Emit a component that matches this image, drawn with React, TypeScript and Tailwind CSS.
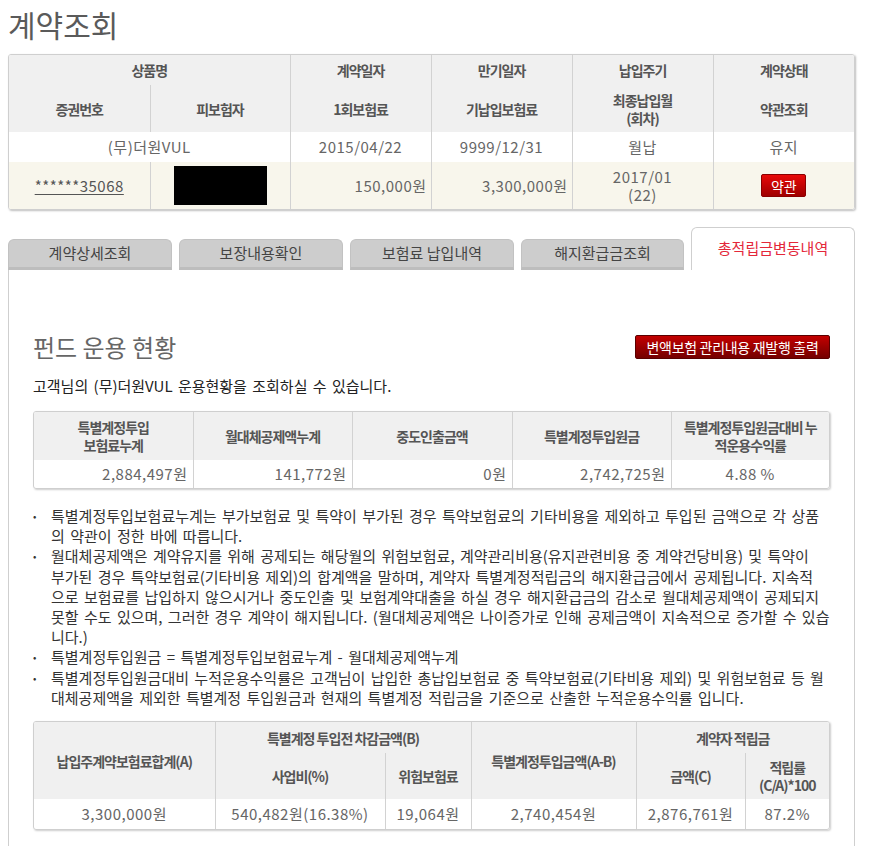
const th = "bg-[#f0f0f0] text-[14px] font-bold tracking-[-1px] text-[#555] leading-[18px] text-center align-middle";
const td = "text-[15px] tracking-[0.5px] text-[#666] leading-[18px] align-middle";
const bl = "border-l border-[#d2d2d2]";

const tabs = ["계약상세조회", "보장내용확인", "보험료 납입내역", "해지환급금조회"];

const notes: string[][] = [
  [
    "특별계정투입보험료누계는 부가보험료 및 특약이 부가된 경우 특약보험료의 기타비용을 제외하고 투입된 금액으로 각 상품",
    "의 약관이 정한 바에 따릅니다.",
  ],
  [
    "월대체공제액은 계약유지를 위해 공제되는 해당월의 위험보험료, 계약관리비용(유지관련비용 중 계약건당비용) 및 특약이",
    "부가된 경우 특약보험료(기타비용 제외)의 합계액을 말하며, 계약자 특별계정적립금의 해지환급금에서 공제됩니다. 지속적",
    "으로 보험료를 납입하지 않으시거나 중도인출 및 보험계약대출을 하실 경우 해지환급금의 감소로 월대체공제액이 공제되지",
    "못할 수도 있으며, 그러한 경우 계약이 해지됩니다. (월대체공제액은 나이증가로 인해 공제금액이 지속적으로 증가할 수 있습",
    "니다.)",
  ],
  ["특별계정투입원금 = 특별계정투입보험료누계 - 월대체공제액누계"],
  [
    "특별계정투입원금대비 누적운용수익률은 고객님이 납입한 총납입보험료 중 특약보험료(기타비용 제외) 및 위험보험료 등 월",
    "대체공제액을 제외한 특별계정 투입원금과 현재의 특별계정 적립금을 기준으로 산출한 누적운용수익률 입니다.",
  ],
];

function ContractTable() {
  return (
    <div className="ml-[8px] w-[847px] overflow-hidden rounded-[3px] border border-[#cfcfcf] shadow-[1px_1px_2px_rgba(0,0,0,0.25)]">
      <table className="w-full table-fixed border-collapse">
        <colgroup>
          <col className="w-[141px]" />
          <col className="w-[140px]" />
          <col className="w-[141px]" />
          <col className="w-[141px]" />
          <col className="w-[141px]" />
          <col className="w-[141px]" />
        </colgroup>
        <tbody>
          <tr className="h-[30px]">
            <th colSpan={2} className={th}>상품명</th>
            <th className={`${th} ${bl}`}>계약일자</th>
            <th className={`${th} ${bl}`}>만기일자</th>
            <th className={`${th} ${bl}`}>납입주기</th>
            <th className={`${th} ${bl}`}>계약상태</th>
          </tr>
          <tr className="h-[47px]">
            <th className={th}>증권번호</th>
            <th className={`${th} ${bl}`}>피보험자</th>
            <th className={`${th} ${bl}`}>1회보험료</th>
            <th className={`${th} ${bl}`}>기납입보험료</th>
            <th className={`${th} ${bl}`}>
              최종납입월
              <br />
              (회차)
            </th>
            <th className={`${th} ${bl}`}>약관조회</th>
          </tr>
          <tr className="h-[30px] bg-white">
            <td colSpan={2} className={`${td} text-center`}>(무)더원VUL</td>
            <td className={`${td} ${bl} text-center`}>2015/04/22</td>
            <td className={`${td} ${bl} text-center`}>9999/12/31</td>
            <td className={`${td} ${bl} text-center`}>월납</td>
            <td className={`${td} ${bl} text-center`}>유지</td>
          </tr>
          <tr className="h-[47px] bg-[#f8f6ec]">
            <td className={`${td} text-center`}>
              <a href="#" className="text-[#555] underline underline-offset-2">******35068</a>
            </td>
            <td className={`${bl} align-middle`}>
              <div className="mx-auto h-[39px] w-[93px] bg-black" />
            </td>
            <td className={`${td} ${bl} pr-[4px] text-right`}>150,000원</td>
            <td className={`${td} ${bl} pr-[4px] text-right`}>3,300,000원</td>
            <td className={`${td} ${bl} text-center`}>
              2017/01
              <br />
              (22)
            </td>
            <td className={`${bl} align-middle`}>
              <button className="mx-auto flex h-[23px] w-[45px] items-center justify-center rounded-[2px] border border-[#8a0000] bg-gradient-to-b from-[#e80a0a] to-[#a00000] text-[14px] leading-none text-white">
                약관
              </button>
            </td>
          </tr>
        </tbody>
      </table>
    </div>
  );
}

function Tabs() {
  return (
    <div className="ml-[8px] mt-[17px] flex w-[847px] items-end gap-[7px]">
      {tabs.map((t, i) => (
        <div
          key={t}
          className={`flex h-[31px] items-center justify-center rounded-t-[6px] border border-b-[3px] border-[#c2c2c2] border-b-[#bdbdbd] bg-[#cdcdcd] text-[15px] text-[#444] ${
            i === 3 ? "w-[163px]" : "w-[164px]"
          }`}
        >
          {t}
        </div>
      ))}
      <div className="flex h-[43px] w-[164px] justify-center rounded-t-[6px] border border-b-0 border-[#cfcfcf] bg-white pt-[8px] text-[15px] leading-[24px] text-[#e4273a]">
        총적립금변동내역
      </div>
    </div>
  );
}

function FundTable() {
  return (
    <div className="mt-[15px] w-[797px] overflow-hidden rounded-[3px] border border-[#cfcfcf] shadow-[1px_1px_2px_rgba(0,0,0,0.2)]">
      <table className="w-full table-fixed border-collapse">
        <colgroup>
          <col className="w-[159px]" />
          <col className="w-[159px]" />
          <col className="w-[160px]" />
          <col className="w-[159px]" />
          <col className="w-[158px]" />
        </colgroup>
        <tbody>
          <tr className="h-[48px]">
            <th className={th}>
              특별계정투입
              <br />
              보험료누계
            </th>
            <th className={`${th} ${bl}`}>월대체공제액누계</th>
            <th className={`${th} ${bl}`}>중도인출금액</th>
            <th className={`${th} ${bl}`}>특별계정투입원금</th>
            <th className={`${th} ${bl}`}>
              특별계정투입원금대비 누
              <br />
              적운용수익률
            </th>
          </tr>
          <tr className="h-[28px]">
            <td className={`${td} pr-[5px] text-right`}>2,884,497원</td>
            <td className={`${td} ${bl} pr-[5px] text-right`}>141,772원</td>
            <td className={`${td} ${bl} pr-[5px] text-right`}>0원</td>
            <td className={`${td} ${bl} pr-[5px] text-right`}>2,742,725원</td>
            <td className={`${td} ${bl} text-center`}>4.88 %</td>
          </tr>
        </tbody>
      </table>
    </div>
  );
}

function ReserveTable() {
  return (
    <div className="mt-[13px] w-[797px] overflow-hidden rounded-[3px] border border-[#cfcfcf] shadow-[1px_1px_2px_rgba(0,0,0,0.2)]">
      <table className="w-full table-fixed border-collapse">
        <colgroup>
          <col className="w-[181px]" />
          <col className="w-[170px]" />
          <col className="w-[86px]" />
          <col className="w-[165px]" />
          <col className="w-[109px]" />
          <col className="w-[84px]" />
        </colgroup>
        <tbody>
          <tr className="h-[31px]">
            <th rowSpan={2} className={th}>납입주계약보험료합계(A)</th>
            <th colSpan={2} className={`${th} ${bl}`}>특별계정 투입전 차감금액(B)</th>
            <th rowSpan={2} className={`${th} ${bl}`}>특별계정투입금액(A-B)</th>
            <th colSpan={2} className={`${th} ${bl}`}>계약자 적립금</th>
          </tr>
          <tr className="h-[46px]">
            <th className={`${th} ${bl}`}>사업비(%)</th>
            <th className={`${th} ${bl}`}>위험보험료</th>
            <th className={`${th} ${bl}`}>금액(C)</th>
            <th className={`${th} ${bl}`}>
              적립률
              <br />
              (C/A)*100
            </th>
          </tr>
          <tr className="h-[30px]">
            <td className={`${td} text-center`}>3,300,000원</td>
            <td className={`${td} ${bl} text-center`}>540,482원(16.38%)</td>
            <td className={`${td} ${bl} text-center`}>19,064원</td>
            <td className={`${td} ${bl} text-center`}>2,740,454원</td>
            <td className={`${td} ${bl} text-center`}>2,876,761원</td>
            <td className={`${td} ${bl} text-center`}>87.2%</td>
          </tr>
        </tbody>
      </table>
    </div>
  );
}

export default function App() {
  return (
    <div className="min-h-[846px] w-[869px] bg-white font-['Noto_Sans_CJK_KR','Noto_Sans',sans-serif]">
      <h1 className="pl-[8px] pt-[4px] text-[30px] font-normal leading-[40px] text-[#5a5a5a]">계약조회</h1>
      <div className="mt-[10px]">
        <ContractTable />
      </div>
      <Tabs />
      {/* 총적립금변동내역 panel */}
      <div className="ml-[8px] w-[847px] border-x border-[#cfcfcf] pb-[18px] pl-[24px] pr-[24px] pt-[62px]">
        <div className="flex h-[30px] items-center justify-between">
          <h2 className="text-[24px] font-normal leading-[30px] text-[#666]">펀드 운용 현황</h2>
          <button className="flex h-[24px] w-[195px] items-center justify-center rounded-[2px] border border-[#5a0000] bg-gradient-to-b from-[#c40000] to-[#740000] text-[14px] leading-none tracking-[-0.3px] text-white">
            변액보험 관리내용 재발행 출력
          </button>
        </div>
        <p className="mt-[14px] text-[15px] leading-[20px] text-[#222] [word-spacing:2px]">
          고객님의 (무)더원VUL 운용현황을 조회하실 수 있습니다.
        </p>
        <FundTable />
        <ul className="mt-[17px] text-[15px] leading-[20.2px] text-[#333] [word-spacing:2px]">
          {notes.map((lines, i) => (
            <li key={i} className="flex whitespace-nowrap">
              <span className="w-[18px] shrink-0 text-[10px]">•</span>
              <span>
                {lines.map((l, j) => (
                  <span key={j} className="block">
                    {l}
                  </span>
                ))}
              </span>
            </li>
          ))}
        </ul>
        <ReserveTable />
      </div>
    </div>
  );
}
